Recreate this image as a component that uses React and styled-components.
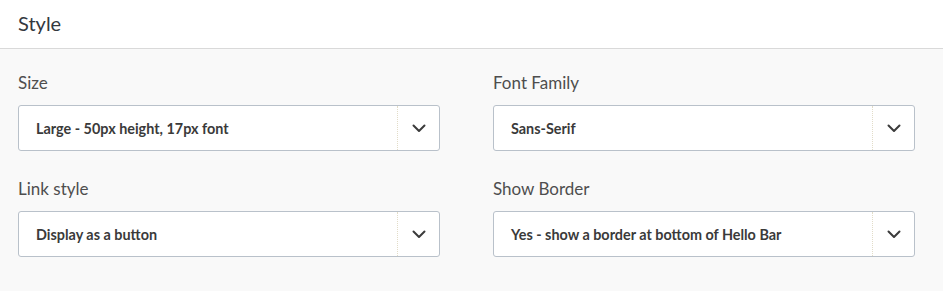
import React from 'react';
import styled, { createGlobalStyle } from 'styled-components';

const GlobalStyle = createGlobalStyle`
  html, body {
    margin: 0;
    padding: 0;
    background: #f9f9f9;
  }
  body {
    font-family: "Lato", "Open Sans", sans-serif;
  }
`;

const fields = [
  { label: 'Size', value: 'Large - 50px height, 17px font' },
  { label: 'Font Family', value: 'Sans-Serif' },
  { label: 'Link style', value: 'Display as a button' },
  { label: 'Show Border', value: 'Yes - show a border at bottom of Hello Bar' },
];

function Chevron() {
  return (
    <svg width="14" height="9" viewBox="0 0 14 9" fill="none">
      <path d="M1.5 1.5L7 7L12.5 1.5" stroke="#3b3b3b" strokeWidth="2" strokeLinecap="round" strokeLinejoin="round" />
    </svg>
  );
}

function App() {
  return (
    <Panel>
      <GlobalStyle />
      <Header>
        <Title>Style</Title>
      </Header>
      <Body>
        {fields.map((f) => (
          <Field key={f.label}>
            <Label>{f.label}</Label>
            <Select>
              <Value>{f.value}</Value>
              <Toggle>
                <Chevron />
              </Toggle>
            </Select>
          </Field>
        ))}
      </Body>
    </Panel>
  );
}

const Panel = styled.div`
  width: 943px;
  height: 291px;
  background: #f9f9f9;
  overflow: hidden;
`;

const Header = styled.div`
  height: 49px;
  background: #ffffff;
  border-bottom: 1px solid #d9d9d9;
  display: flex;
  align-items: center;
  padding-left: 18px;
  padding-bottom: 2px;
  box-sizing: border-box;
`;

const Title = styled.h2`
  margin: 0;
  font-size: 20px;
  font-weight: 400;
  color: #333840;
`;

const Body = styled.div`
  display: grid;
  grid-template-columns: 1fr 1fr;
  column-gap: 53px;
  row-gap: 28px;
  padding: 24px 28px 0 18px;
`;

const Field = styled.div`
  display: flex;
  flex-direction: column;
`;

const Label = styled.label`
  font-size: 17px;
  line-height: 20px;
  color: #4e4e4e;
  margin-bottom: 12px;
`;

const Select = styled.div`
  display: flex;
  align-items: stretch;
  height: 46px;
  box-sizing: border-box;
  background: #ffffff;
  border: 1px solid #b9c1ca;
  border-radius: 3px;
`;

const Value = styled.div`
  flex: 1;
  display: flex;
  align-items: center;
  padding-left: 17px;
  font-size: 14.4px;
  font-weight: 700;
  color: #3a3a3a;
`;

const Toggle = styled.div`
  width: 41px;
  display: flex;
  align-items: center;
  justify-content: center;
  border-left: 1px dotted #e2dcc8;
`;

export default App;
